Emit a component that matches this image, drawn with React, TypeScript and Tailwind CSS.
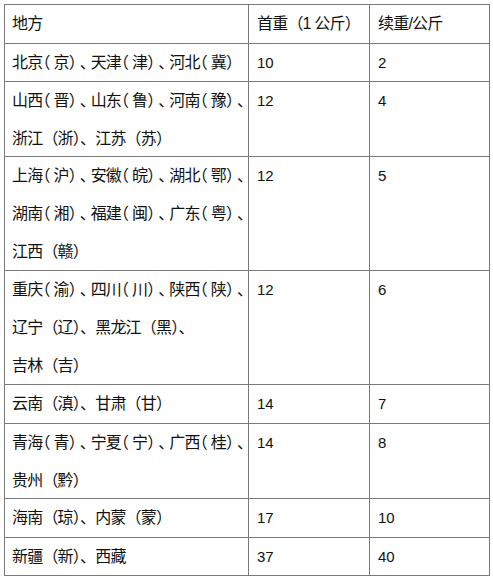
import React from "react";

type Line = { t: string; tight?: boolean };
type Row = { h: string; place: Line[]; first: string; next: string; head?: boolean };

const ROWS: Row[] = [
  { h: "h-[39px]", place: [{ t: "地方" }], first: "首重（1 公斤）", next: "续重/公斤", head: true },
  { h: "h-[38px]", place: [{ t: "北京（京）、天津（津）、河北（冀）", tight: true }], first: "10", next: "2" },
  {
    h: "h-[75px]",
    place: [{ t: "山西（晋）、山东（鲁）、河南（豫）、", tight: true }, { t: "浙江（浙）、江苏（苏）" }],
    first: "12",
    next: "4",
  },
  {
    h: "h-[114px]",
    place: [
      { t: "上海（沪）、安徽（皖）、湖北（鄂）、", tight: true },
      { t: "湖南（湘）、福建（闽）、广东（粤）、", tight: true },
      { t: "江西（赣）" },
    ],
    first: "12",
    next: "5",
  },
  {
    h: "h-[114px]",
    place: [
      { t: "重庆（渝）、四川（川）、陕西（陕）、", tight: true },
      { t: "辽宁（辽）、黑龙江（黑）、" },
      { t: "吉林（吉）" },
    ],
    first: "12",
    next: "6",
  },
  { h: "h-[39px]", place: [{ t: "云南（滇）、甘肃（甘）" }], first: "14", next: "7" },
  {
    h: "h-[75px]",
    place: [{ t: "青海（青）、宁夏（宁）、广西（桂）、", tight: true }, { t: "贵州（黔）" }],
    first: "14",
    next: "8",
  },
  { h: "h-[39px]", place: [{ t: "海南（琼）、内蒙（蒙）" }], first: "17", next: "10" },
  { h: "h-[38px]", place: [{ t: "新疆（新）、西藏" }], first: "37", next: "40" },
];

const PUNCT = "（）、";

// tight lines: punctuation squeezed to roughly half width, like the source doc
function TextLine({ line }: { line: Line }) {
  if (!line.tight) return <div className="whitespace-nowrap">{line.t}</div>;
  return (
    <div className="whitespace-nowrap">
      {Array.from(line.t).map((ch, i) =>
        PUNCT.includes(ch) ? (
          <span key={i} className="[font-feature-settings:'halt'] tracking-[3px]">
            {ch}
          </span>
        ) : (
          <span key={i}>{ch}</span>
        )
      )}
    </div>
  );
}

export default function App() {
  return (
    <div className="min-h-screen bg-white pl-[4px] pt-[4px] text-[#111] font-['Liberation_Sans','Noto_Sans_CJK_SC',sans-serif]">
      <div className="grid w-[486px] grid-cols-[244px_121px_120px] border-l border-t border-[#7a7a7a]">
        {ROWS.map((r, i) => (
          <React.Fragment key={i}>
            <div className={`${r.h} border-b border-r border-[#7a7a7a] pl-[7px] text-[16px] leading-[38px] tracking-[-0.8px]`}>
              {r.place.map((l, j) => (
                <TextLine key={j} line={l} />
              ))}
            </div>
            <div
              className={`${r.h} border-b border-r border-[#7a7a7a] pl-[8px] leading-[38px] whitespace-nowrap ${
                r.head ? "text-[16px] tracking-[-0.8px]" : "text-[15px]"
              }`}
            >
              {r.first}
            </div>
            <div
              className={`${r.h} border-b border-r border-[#7a7a7a] pl-[8px] leading-[38px] whitespace-nowrap ${
                r.head ? "text-[16px] tracking-[-0.8px]" : "text-[15px]"
              }`}
            >
              {r.next}
            </div>
          </React.Fragment>
        ))}
      </div>
    </div>
  );
}
